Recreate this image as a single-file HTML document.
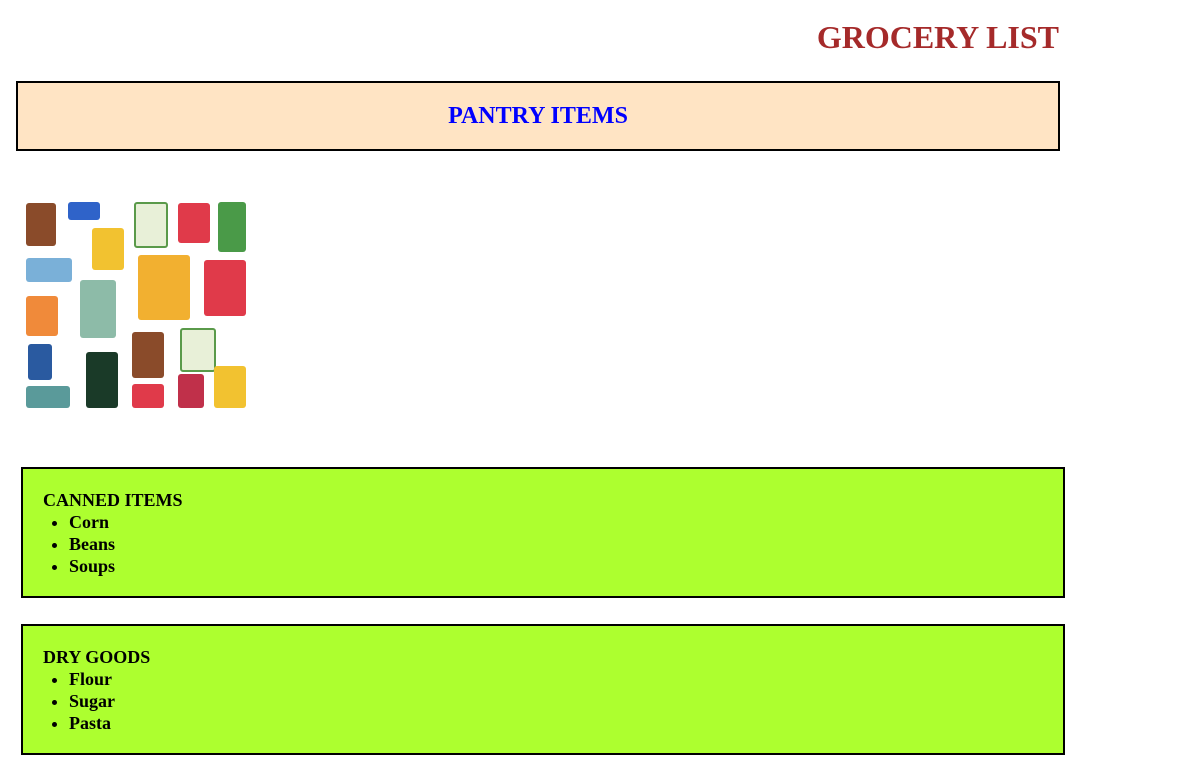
<!DOCTYPE html>
<html><head><style>
body{margin:0;background:#fff;font-family:"Liberation Serif",serif;}
h1{position:absolute;right:144px;top:19px;margin:0;font-size:32px;color:#a52a2a;font-weight:bold;line-height:36px;}
.pantry{position:absolute;left:16px;top:81px;width:1040px;height:66px;background:#ffe4c4;border:2px solid #000;text-align:center;}
.pantry span{display:block;margin-top:19px;color:#0000ff;font-weight:bold;font-size:24px;line-height:28px;}
.box{position:absolute;left:21px;width:1040px;height:127px;background:#adff2f;border:2px solid #000;font-weight:bold;font-size:18px;line-height:22px;}
.box .in{position:absolute;left:20px;top:20px;}
.box ul{margin:0;padding-left:26px;}
.c{position:absolute;border-radius:3px;}
</style></head><body>
<h1>GROCERY LIST</h1>
<div class="pantry"><span>PANTRY ITEMS</span></div>
<div style="position:absolute;left:24px;top:200px;width:224px;height:210px;">
<div class="c" style="left:2px;top:3px;width:30px;height:43px;background:#8a4b2a"></div>
<div class="c" style="left:44px;top:2px;width:32px;height:18px;background:#2f63c9"></div>
<div class="c" style="left:68px;top:28px;width:32px;height:42px;background:#f2c230"></div>
<div class="c" style="left:110px;top:2px;width:30px;height:42px;background:#e8f0d8;border:2px solid #5a9a4a"></div>
<div class="c" style="left:154px;top:3px;width:32px;height:40px;background:#e03a4a"></div>
<div class="c" style="left:194px;top:2px;width:28px;height:50px;background:#4a9a48"></div>
<div class="c" style="left:2px;top:58px;width:46px;height:24px;background:#7ab0d8"></div>
<div class="c" style="left:56px;top:80px;width:36px;height:58px;background:#8dbba8"></div>
<div class="c" style="left:114px;top:55px;width:52px;height:65px;background:#f2b030"></div>
<div class="c" style="left:180px;top:60px;width:42px;height:56px;background:#e03a4a"></div>
<div class="c" style="left:2px;top:96px;width:32px;height:40px;background:#f08a3a"></div>
<div class="c" style="left:4px;top:144px;width:24px;height:36px;background:#2a5aa0"></div>
<div class="c" style="left:62px;top:152px;width:32px;height:56px;background:#1a3a28"></div>
<div class="c" style="left:108px;top:132px;width:32px;height:46px;background:#8a4b2a"></div>
<div class="c" style="left:156px;top:128px;width:32px;height:40px;background:#e8f0d8;border:2px solid #5a9a4a"></div>
<div class="c" style="left:2px;top:186px;width:44px;height:22px;background:#5a9a9a"></div>
<div class="c" style="left:108px;top:184px;width:32px;height:24px;background:#e03a4a"></div>
<div class="c" style="left:154px;top:174px;width:26px;height:34px;background:#c0304a"></div>
<div class="c" style="left:190px;top:166px;width:32px;height:42px;background:#f2c230"></div>
</div>
<div class="box" style="top:467px"><div class="in">CANNED ITEMS<ul><li>Corn</li><li>Beans</li><li>Soups</li></ul></div></div>
<div class="box" style="top:624px"><div class="in">DRY GOODS<ul><li>Flour</li><li>Sugar</li><li>Pasta</li></ul></div></div>
</body></html>
